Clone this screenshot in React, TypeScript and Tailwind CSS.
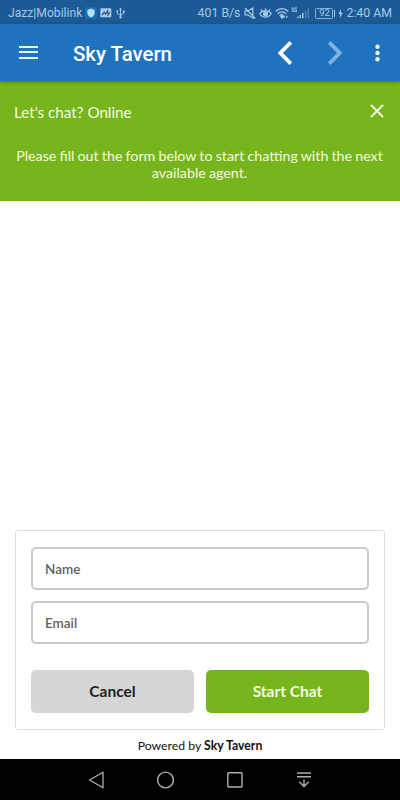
import React, { useState } from 'react';

const StatusBar = () => (
  <div className="flex h-6 items-center bg-[#1c5a95] pt-0.5 pl-2 pr-2 text-[12.15px] text-[#a3c8eb]">
    <span className="w-[77px] whitespace-nowrap">Jazz|Mobilink</span>
    <svg className="h-[12px] w-[12px]" viewBox="0 0 12 12">
      <rect width="12" height="12" rx="2" fill="#1a70b6" />
      <path d="M6 1.6L9.6 3V6C9.6 8.2 8 9.8 6 10.6C4 9.8 2.4 8.2 2.4 6V3Z" fill="#b4e3f8" />
    </svg>
    <svg className="ml-[3px] h-[10px] w-[12px]" viewBox="0 0 12 10">
      <rect x="0.3" y="0.3" width="11" height="9" rx="0.8" fill="#a9c9e7" />
      <path d="M2 7L4.2 4.3L5.6 6L7.7 2.8L8 6.8L9.8 4.5" fill="none" stroke="#24588c" strokeWidth="1.2" />
    </svg>
    <svg className="ml-[4px] h-[12px] w-[9px]" viewBox="0 0 9 12" fill="none" stroke="currentColor" strokeWidth="1">
      <path d="M4.5 2V10M1.3 4V6.6L4.5 8.3L7.7 6.6V4.5" />
      <path d="M3 2.8L4.5 0.5L6 2.8Z" fill="currentColor" stroke="none" />
      <circle cx="1.3" cy="4.3" r="1" fill="currentColor" stroke="none" />
      <rect x="6.7" y="3.5" width="2" height="2" fill="currentColor" stroke="none" />
      <circle cx="4.5" cy="10.3" r="1.2" fill="currentColor" stroke="none" />
    </svg>

    <div className="ml-auto flex items-center text-[12.3px]">
      <span className="whitespace-nowrap">401 B/s</span>
      <svg className="ml-1 h-[12px] w-[12px]" viewBox="0 0 12 12" fill="none" stroke="currentColor" strokeWidth="1.2">
        <path d="M1 4.2H3.6L8.8 1V11L3.6 7.8H1ZM1 1L11.3 11.5" />
      </svg>
      <svg className="ml-[3px] h-[12px] w-[13px]" viewBox="0 0 13 12" fill="none" stroke="currentColor" strokeWidth="1.2">
        <path d="M0.8 6.5C3.2 3 9.8 3 12.2 6.5C9.8 11.4 3.2 11.4 0.8 6.5Z" />
        <circle cx="6.5" cy="6.8" r="2" fill="currentColor" />
        <path d="M6.5 3.7V1.2M3.4 4.3L2.1 2.3M9.6 4.3L10.9 2.3" />
      </svg>
      <svg className="ml-[3px] h-[12px] w-[14px]" viewBox="0 0 14 12" fill="none" stroke="currentColor" strokeWidth="1.3">
        <path d="M0.7 4.5C4.2 0.7 9.8 0.7 13.3 4.5M2.7 6.7C5.1 4.2 8.9 4.2 11.3 6.7M4.7 8.8C6 7.5 7.5 7.5 8.6 8.5" />
        <path d="M5.8 9.5L7 11L8.2 9.5ZM9.2 10.8V8.8M11.8 10.8V8.8" />
      </svg>
      <svg className="ml-0.5 h-[12px] w-[19px]" viewBox="0 0 19 12" fill="currentColor">
        <path d="M0.5 0.6H2.6V5.1H0.5V4.2H1.7V3.2H0.7V2.4H1.7V1.5H0.5ZM3.5 0.6H6V1.5H4.4V4.2H5.2V2.5H6V5.1H3.5Z" />
        <path d="M6 9.5H7.5V11.2H6ZM8.5 8H10V11.2H8.5ZM11 6H12.5V11.2H11Z" />
        <path d="M14 3.5H15.3V11.2H14ZM16.7 1H18V11.2H16.7Z" opacity="0.4" />
      </svg>
      <div className="ml-[5px] flex items-center">
        <span className="flex h-[11px] w-[18px] items-center justify-center rounded-[1.5px] border border-[#86b1d9] text-[9.5px] leading-none">92</span>
        <span className="ml-px h-[7px] w-px bg-[#a3c8eb]" />
      </div>
      <svg className="ml-[3px] h-[9px] w-[5px]" viewBox="0 0 5 9" fill="currentColor">
        <path d="M2.9 0L0.3 5H2.1L1.9 9L4.8 3.8H2.9Z" />
      </svg>
      <span className="ml-[3px] whitespace-nowrap">2:40 AM</span>
    </div>
  </div>
);

const Toolbar = () => (
  <header className="relative flex h-[57px] items-center bg-[#1f72be] pt-0.5 text-white shadow-[0_1px_3px_rgba(0,0,0,0.4)]">
    <button aria-label="Menu" className="ml-[19px] flex w-[19px] flex-col gap-[3.5px] pb-[3px]">
      <span className="h-[2px] bg-[#e6f7ff]" />
      <span className="h-[2px] bg-[#e6f7ff]" />
      <span className="h-[2px] bg-[#e6f7ff]" />
    </button>
    <h1 className="ml-[35px] text-[20.4px] font-medium leading-6">Sky Tavern</h1>
    <div className="ml-auto flex items-center pb-[1px] pr-[20px]">
      <svg className="h-6 w-4" viewBox="0 0 16 24" fill="none" stroke="currentColor" strokeWidth="3.8">
        <path d="M13.8 1.3L3.3 12L13.8 22.7" />
      </svg>
      <svg className="ml-[34px] h-6 w-4" viewBox="0 0 16 24" fill="none" stroke="#7fb2e4" strokeWidth="3.8">
        <path d="M2.2 1.3L12.7 12L2.2 22.7" />
      </svg>
      <svg className="ml-[32px] h-[18px] w-[5px]" viewBox="0 0 5 18" fill="#e6f7ff">
        <circle cx="2.5" cy="2.8" r="2.2" />
        <circle cx="2.5" cy="9" r="2.2" />
        <circle cx="2.5" cy="15.2" r="2.2" />
      </svg>
    </div>
  </header>
);

const ChatHeader = () => (
  <section className="h-[120px] bg-[#76b51b] font-['Lato',sans-serif] text-[#f5fae0]">
    <div className="flex items-center justify-between pl-[14px] pr-[16px] pt-[20px]">
      <h2 className="text-[15.2px] leading-[22px]">Let's chat? Online</h2>
      <button aria-label="Close" className="pb-0.5">
        <svg className="h-[14px] w-[14px]" viewBox="0 0 14 14" fill="none" stroke="currentColor" strokeWidth="2" strokeLinecap="round">
          <path d="M1.5 1.5L12.5 12.5M12.5 1.5L1.5 12.5" />
        </svg>
      </button>
    </div>
    <p className="mt-[24px] pr-px text-center text-[14.25px] leading-[17px] [word-spacing:-0.5px]">
      Please fill out the form below to start chatting with the next
      <br />
      available agent.
    </p>
  </section>
);

const NavBar = () => (
  <nav className="flex h-[41px] items-center bg-black text-[#b0b0b0]">
    <svg className="ml-[88px] h-[18px] w-4" viewBox="0 0 16 18" fill="none" stroke="currentColor" strokeWidth="1.3" strokeLinejoin="round">
      <path d="M15 1.2L1.5 9L15 16.8Z" />
    </svg>
    <svg className="ml-[52px] h-[18px] w-[18px]" viewBox="0 0 18 18" fill="none" stroke="currentColor" strokeWidth="1.4">
      <circle cx="9.5" cy="9" r="7.9" />
    </svg>
    <svg className="ml-[53px] h-4 w-4" viewBox="0 0 16 16" fill="none" stroke="currentColor" strokeWidth="1.4">
      <rect x="0.8" y="0.8" width="14.2" height="14.2" rx="0.8" />
    </svg>
    <svg className="ml-[54px] h-4 w-[14px]" viewBox="0 0 14 16" fill="none" stroke="currentColor" strokeWidth="1.4">
      <path d="M0 1H14M0 4.7H14M7 7.5V14.5M2.2 9.7L7 14.5L11.8 9.7" />
    </svg>
  </nav>
);

export default function App(): React.ReactElement {
  const [name, setName] = useState('');
  const [email, setEmail] = useState('');

  return (
    <div className="flex h-[800px] w-[400px] flex-col overflow-hidden bg-white font-['Roboto',sans-serif]">
      <StatusBar />
      <Toolbar />
      <ChatHeader />

      <main className="flex flex-1 flex-col justify-end px-[15px] font-['Lato',sans-serif]">
        <form className="h-[200px] rounded-[3px] border border-[#dedede] px-[15px] pt-4" onSubmit={e => e.preventDefault()}>
          <div className="flex flex-col gap-[11px]">
            <input
              value={name}
              onChange={e => setName(e.target.value)}
              placeholder="Name"
              className="h-[43px] w-full rounded-[5px] border-2 border-[#cacaca] px-3 text-[13.5px] font-semibold text-[#555] placeholder:text-[#606060]"
            />
            <input
              value={email}
              onChange={e => setEmail(e.target.value)}
              placeholder="Email"
              className="h-[43px] w-full rounded-[5px] border-2 border-[#cacaca] px-3 text-[13.5px] font-semibold text-[#555] placeholder:text-[#606060]"
            />
          </div>
          <div className="mt-[26px] grid grid-cols-2 gap-3 text-[15.5px] font-bold">
            <button type="button" className="h-[43px] rounded-[5px] bg-[#d6d6d6] text-[#222]">Cancel</button>
            <button type="submit" className="h-[43px] rounded-[5px] bg-[#76b51b] text-[#f7fbe5]">Start Chat</button>
          </div>
        </form>
        <p className="pt-[8px] pb-[5px] text-center text-[12.25px] leading-4 text-[#111]">
          Powered by <strong>Sky Tavern</strong>
        </p>
      </main>

      <NavBar />
    </div>
  );
}
